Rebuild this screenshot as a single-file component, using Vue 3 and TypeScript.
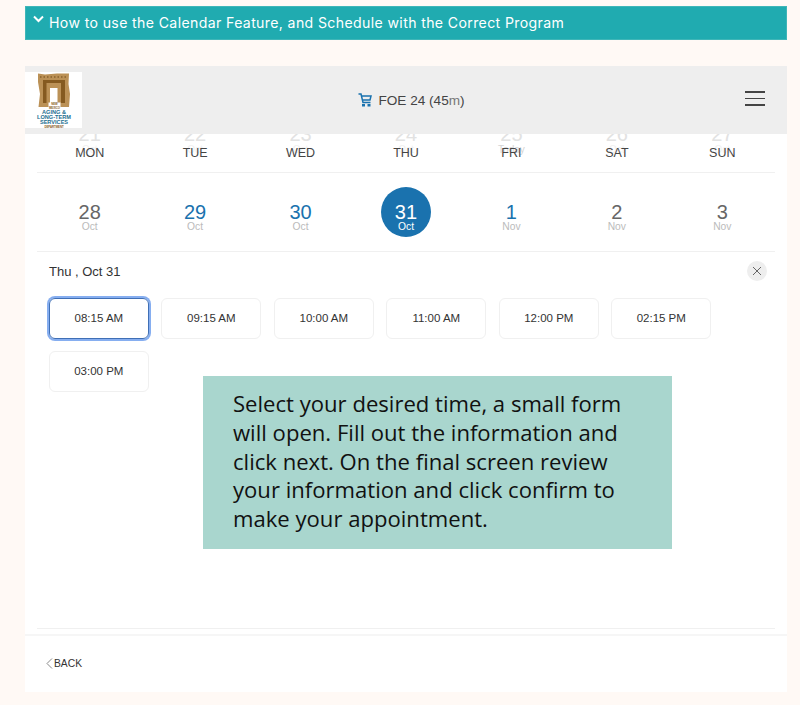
<script setup lang="ts">
import { ref } from "vue";

// semaine du haut, à moitié cachée sous l'en-tête
const weekDays = [
  { label: "MON", num: 21, sub: "Oct" },
  { label: "TUE", num: 22, sub: "Oct" },
  { label: "WED", num: 23, sub: "Oct" },
  { label: "THU", num: 24, sub: "Oct" },
  { label: "FRI", num: 25, sub: "Today" },
  { label: "SAT", num: 26, sub: "Oct" },
  { label: "SUN", num: 27, sub: "Oct" },
];

const dates = [
  { num: 28, sub: "Oct", state: "off" },
  { num: 29, sub: "Oct", state: "open" },
  { num: 30, sub: "Oct", state: "open" },
  { num: 31, sub: "Oct", state: "selected" },
  { num: 1, sub: "Nov", state: "open" },
  { num: 2, sub: "Nov", state: "off" },
  { num: 3, sub: "Nov", state: "off" },
];

const slots = [
  "08:15 AM",
  "09:15 AM",
  "10:00 AM",
  "11:00 AM",
  "12:00 PM",
  "02:15 PM",
  "03:00 PM",
];

const activeSlot = ref("08:15 AM");
</script>

<template>
  <div class="page">
    <div class="banner">
      <svg class="chevron" width="11" height="8" viewBox="0 0 11 8">
        <path d="M1 1.5 L5.5 6 L10 1.5" fill="none" stroke="#fff" stroke-width="2" />
      </svg>
      <span>How to use the Calendar Feature, and Schedule with the Correct Program</span>
    </div>

    <div class="card">
      <header class="topbar">
        <svg class="logo" width="57" height="56" viewBox="0 0 57 56">
          <rect width="57" height="56" fill="#fff" />
          <path
            d="M13 1.500 L20 2.500 L32 1.500 L44 1.500 L43.500 12 L45 22 L44 35 L13.500 35 L15 22 L13 10 Z"
            fill="#bb9156"
          />
          <path d="M15 5 H43" stroke="#6e4a18" stroke-width="1.200" stroke-dasharray="1.500 2" />
          <path d="M18 8 H40 V31 H36 V11 H21.500 V31 H18 Z" fill="#855a20" />
          <rect x="25" y="16" width="7.500" height="15" fill="#fff" />
          <rect x="23.500" y="30.500" width="12" height="7.500" fill="#fff" />
          <text x="29.500" y="33" class="logo-tiny" fill="#855a20">NEW</text>
          <text x="29.500" y="37" class="logo-tiny" fill="#855a20">MEXICO</text>
          <text x="29" y="42" class="logo-big" fill="#1c6f91">AGING &amp;</text>
          <text x="29" y="47" class="logo-big" fill="#1c6f91">LONG-TERM</text>
          <text x="29" y="51.500" class="logo-big" fill="#1c6f91">SERVICES</text>
          <text x="29" y="55.500" class="logo-tiny" fill="#855a20">DEPARTMENT</text>
        </svg>

        <div class="service">
          <svg class="cart" width="14" height="14" viewBox="0 0 14 14">
            <path
              d="M0.500 1 H3 L5 9.500 H12.500 M3.600 3 H13 L12 7 H4.500"
              fill="none"
              stroke="#1a72ae"
              stroke-width="1.500"
            />
            <rect x="4" y="11" width="3" height="2.500" fill="#1a72ae" />
            <rect x="9.500" y="11" width="3" height="2.500" fill="#1a72ae" />
          </svg>
          <span>FOE 24 (45<span class="minutes">m</span>)</span>
        </div>

        <div class="burger">
          <i></i>
          <i></i>
          <i></i>
        </div>
      </header>

      <div class="panel">
        <div class="week-row">
          <div v-for="d in weekDays" :key="d.label" class="week-cell">
            <div class="ghost">
              <div class="ghost-num">{{ d.num }}</div>
              <div class="ghost-sub" :class="{ today: d.sub === 'Today' }">{{ d.sub }}</div>
            </div>
            <div class="week-label">{{ d.label }}</div>
          </div>
        </div>

        <div class="date-row">
          <div v-for="d in dates" :key="d.num" class="date-cell">
            <div class="date" :class="d.state">
              <div class="date-num">{{ d.num }}</div>
              <div class="date-sub">{{ d.sub }}</div>
            </div>
          </div>
        </div>

        <div class="times">
          <div class="times-head">
            <span>Thu , Oct 31</span>
            <div class="close">
              <svg width="10" height="10" viewBox="0 0 10 10">
                <path d="M1 1 L9 9 M9 1 L1 9" stroke="#666" stroke-width="1" fill="none" />
              </svg>
            </div>
          </div>
          <div class="slots">
            <div
              v-for="s in slots"
              :key="s"
              class="slot"
              :class="{ active: s === activeSlot }"
              @click="activeSlot = s"
            >
              {{ s }}
            </div>
          </div>
        </div>

        <div class="panel-end"></div>

        <div class="callout">
          Select your desired time, a small form will open. Fill out the information and click next.
          On the final screen review your information and click confirm to make your appointment.
        </div>
      </div>

      <footer class="footer">
        <svg width="7" height="11" viewBox="0 0 7 11">
          <path d="M6 0.500 L1 5.500 L6 10.500" fill="none" stroke="#888" stroke-width="1" />
        </svg>
        <span>BACK</span>
      </footer>
    </div>
  </div>
</template>

<style scoped>
.page {
  width: 800px;
  height: 705px;
  box-sizing: border-box;
  padding: 6px 13px 0 25px;
  background: #fff9f5;
  font-family: "Liberation Sans", Arial, sans-serif;
  color: #333;
  overflow: hidden;
}

.banner {
  height: 34px;
  box-sizing: border-box;
  display: flex;
  align-items: center;
  padding: 0 0 2px 7px;
  background: #20abb0;
  border: 1px solid #3fb6b8;
  color: #fff;
  font-family: Inter, "Open Sans", sans-serif;
  font-size: 14.100px;
  letter-spacing: 0.370px;
}

.chevron {
  margin: -6px 5px 0 0;
}

.card {
  position: relative;
  margin-top: 26px;
  height: 626px;
  background: #fff;
  display: flex;
  flex-direction: column;
}

.topbar {
  position: relative;
  flex: none;
  height: 68px;
  background: #eeeeee;
  display: flex;
  align-items: center;
  justify-content: center;
}

.logo {
  position: absolute;
  left: 0;
  top: 6px;
}

.logo-big {
  font-family: "Liberation Sans", sans-serif;
  font-size: 5.600px;
  font-weight: 700;
  text-anchor: middle;
}

.logo-tiny {
  font-family: "Liberation Sans", sans-serif;
  font-size: 2.800px;
  font-weight: 700;
  text-anchor: middle;
}

.service {
  display: flex;
  align-items: center;
  gap: 6px;
  margin: 0 0 0 11px;
  font-size: 13.600px;
  color: #444;
}

.minutes {
  color: #777;
}

.burger {
  position: absolute;
  right: 22px;
  top: 25px;
  width: 20px;
  display: flex;
  flex-direction: column;
  gap: 5px;
}

.burger i {
  display: block;
  height: 1.500px;
  background: #444;
}

.panel {
  flex: 1;
  padding: 0 12px;
  position: relative;
  display: flex;
  flex-direction: column;
}

.panel-end {
  margin-top: auto;
  height: 1px;
  background: #f0f0f0;
}

.week-row {
  flex: none;
  height: 39px;
  box-sizing: border-box;
  overflow: hidden;
  display: grid;
  grid-template-columns: repeat(7, 1fr);
  border-bottom: 1px solid #f0f0f0;
}

.week-cell {
  display: grid;
  justify-items: center;
  align-items: start;
}

.ghost,
.week-label {
  grid-area: 1 / 1;
}

.ghost {
  margin-top: -11px;
  text-align: center;
  color: #e2e2e2;
}

.ghost-num {
  font-size: 20px;
  line-height: 22px;
}

.ghost-sub {
  font-size: 10px;
  line-height: 10px;
  color: #f0f0f0;
}

.ghost-sub.today {
  color: #d4d4d4;
}

.week-label {
  margin-top: 12px;
  font-size: 12.500px;
  line-height: 15px;
  color: #444;
}

.date-row {
  flex: none;
  height: 79px;
  box-sizing: border-box;
  display: grid;
  grid-template-columns: repeat(7, 1fr);
  align-items: center;
  border-bottom: 1px solid #f0f0f0;
}

.date-cell {
  display: flex;
  justify-content: center;
}

.date {
  width: 50px;
  height: 50px;
  border-radius: 50%;
  display: flex;
  flex-direction: column;
  align-items: center;
  justify-content: center;
  color: #666;
}

.date-num {
  font-size: 20px;
  line-height: 20px;
  margin-top: 9px;
}

.date-sub {
  font-size: 10.300px;
  line-height: 9px;
  color: #bbbbbb;
}

.date.open {
  color: #1a72ae;
}

.date.selected {
  background: #1a72ae;
  color: #fff;
}

.date.selected .date-sub {
  color: #fff;
}

.times {
  padding: 9px 8px 0 12px;
}

.times-head {
  display: flex;
  align-items: center;
  justify-content: space-between;
  height: 20px;
  font-size: 13px;
  color: #333;
}

.close {
  width: 20px;
  height: 20px;
  border-radius: 50%;
  background: #eeeeee;
  display: flex;
  align-items: center;
  justify-content: center;
}

.slots {
  margin-top: 17px;
  display: flex;
  flex-wrap: wrap;
  gap: 12.500px 12.800px;
}

.slot {
  width: 99.700px;
  height: 40.500px;
  box-sizing: border-box;
  border: 1px solid #f0f0f0;
  border-radius: 6px;
  display: flex;
  align-items: center;
  justify-content: center;
  font-size: 11.500px;
  color: #333;
}

.slot.active {
  border: 1px solid #3f6fb5;
  box-shadow: 0 0 0 2px #86aef0;
}

.callout {
  position: absolute;
  left: 178px;
  top: 242px;
  width: 469px;
  height: 173px;
  box-sizing: border-box;
  padding: 13px 30px 0 30px;
  background: #a9d6ce;
  font-family: "Open Sans", sans-serif;
  font-size: 22.100px;
  line-height: 28.800px;
  color: #111;
}

.footer {
  flex: none;
  margin-top: 5px;
  height: 58px;
  box-sizing: border-box;
  border-top: 2px solid #f6f6f6;
  padding: 0 0 1px 21px;
  display: flex;
  align-items: center;
  gap: 1px;
  font-size: 10.300px;
  color: #333;
}
</style>
